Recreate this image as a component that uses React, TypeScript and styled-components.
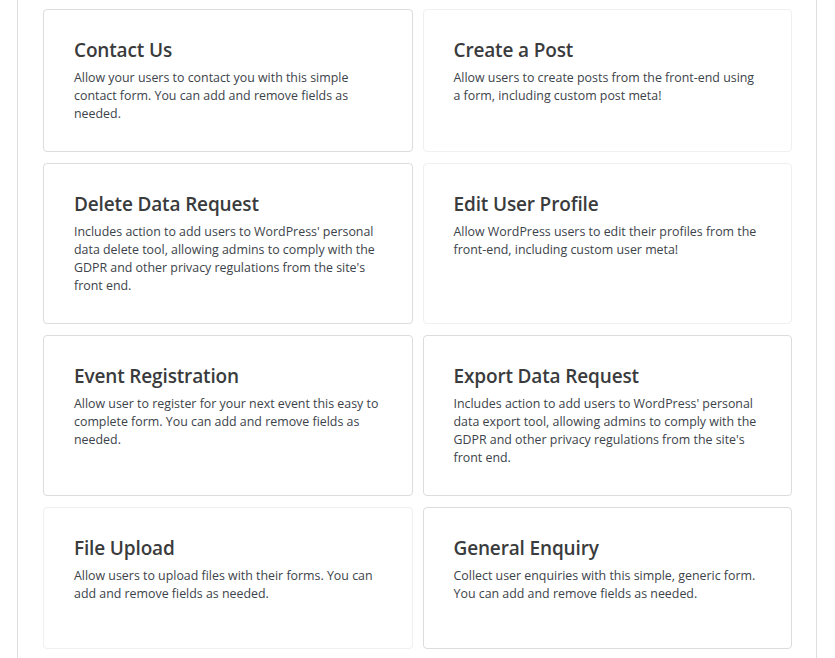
import React from "react";
import styled, { createGlobalStyle } from "styled-components";

const GlobalStyle = createGlobalStyle`
  html, body {
    margin: 0;
    padding: 0;
    background: #ffffff;
  }
  body {
    font-family: "Open Sans", "Noto Sans", "Liberation Sans", sans-serif;
    -webkit-font-smoothing: antialiased;
  }
  * { box-sizing: border-box; }
`;

const Page = styled.div`
  padding-left: 17px;
  width: 835px;
  height: 658px;
  overflow: hidden;
`;

const Panel = styled.div`
  width: 800px;
  min-height: 658px;
  border-left: 1px solid #dedede;
  border-right: 1px solid #dedede;
  padding: 9px 24px 20px 25px;
`;

const Grid = styled.div`
  display: grid;
  grid-template-columns: 1fr 1fr;
  column-gap: 10px;
  row-gap: 10.5px;
`;

const Card = styled.div<{ $light?: boolean }>`
  min-height: 142px;
  border: 1px solid ${(p) => (p.$light ? "#f0f0f1" : "#dcdcde")};
  border-radius: 4px;
  background: #ffffff;
  padding: 28.8px 30px 28.5px;
`;

const Title = styled.h3`
  margin: 0 0 7.2px;
  font-size: 19px;
  line-height: 23px;
  font-weight: 600;
  color: #3a3b3c;
  letter-spacing: -0.15px;
`;

const Desc = styled.p`
  margin: 0;
  font-size: 12.4px;
  line-height: 18px;
  color: #3c434a;
`;

const templates = [
  {
    title: "Contact Us",
    desc: "Allow your users to contact you with this simple contact form. You can add and remove fields as needed.",
    light: false,
  },
  {
    title: "Create a Post",
    desc: "Allow users to create posts from the front-end using a form, including custom post meta!",
    light: true,
  },
  {
    title: "Delete Data Request",
    desc: "Includes action to add users to WordPress' personal data delete tool, allowing admins to comply with the GDPR and other privacy regulations from the site's front end.",
    light: false,
  },
  {
    title: "Edit User Profile",
    desc: "Allow WordPress users to edit their profiles from the front-end, including custom user meta!",
    light: true,
  },
  {
    title: "Event Registration",
    desc: "Allow user to register for your next event this easy to complete form. You can add and remove fields as needed.",
    light: false,
  },
  {
    title: "Export Data Request",
    desc: "Includes action to add users to WordPress' personal data export tool, allowing admins to comply with the GDPR and other privacy regulations from the site's front end.",
    light: false,
  },
  {
    title: "File Upload",
    desc: "Allow users to upload files with their forms. You can add and remove fields as needed.",
    light: true,
  },
  {
    title: "General Enquiry",
    desc: "Collect user enquiries with this simple, generic form. You can add and remove fields as needed.",
    light: false,
  },
];

export default function App() {
  return (
    <>
      <GlobalStyle />
      <Page>
        <Panel>
          <Grid>
            {templates.map((t) => (
              <Card key={t.title} $light={t.light}>
                <Title>{t.title}</Title>
                <Desc>{t.desc}</Desc>
              </Card>
            ))}
          </Grid>
        </Panel>
      </Page>
    </>
  );
}
